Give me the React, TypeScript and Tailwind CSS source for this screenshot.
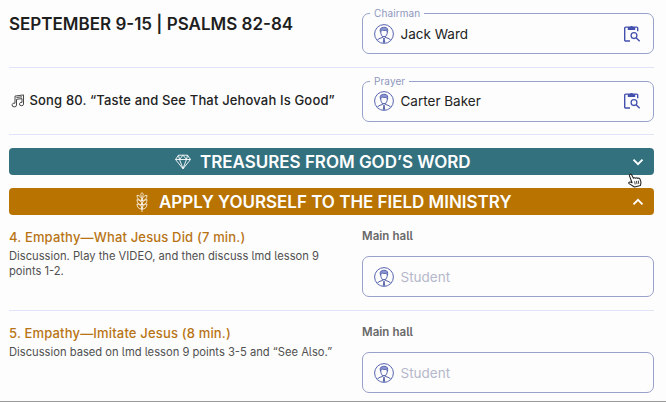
import type { ReactNode } from "react";

function Avatar() {
  return (
    <svg width="20" height="20" viewBox="0 0 20 20" fill="none" stroke="#5864ae" strokeWidth="1" className="shrink-0">
      <circle cx="10" cy="10" r="9.4" />
      <path d="M6.700 7c0 3.800 1.100 5.700 3.300 5.700s3.400-2.200 3.400-5.700" />
      <path d="M6.500 8.200c-.8-2.500-.2-4.200 1.400-4.400 1.600-1 5-.6 5.600 1.200.4 1.200.1 2.200-.1 3.200-.3-1-.5-1.600-.9-2-1.800.5-3.600.2-4.600-.2-.8.3-1.200 1-1.400 2.200z" fill="#8f9ad3" />
      <path d="M8.400 12.200v1.200l-3.900 1.500-1 1.400M11.600 12.200v1.200l3.900 1.500 1 1.400M8.400 13.400l1.600 1.300 1.600-1.300" />
      <path d="M9.300 14.800h1.400l.5 4h-2.400z" fill="#5864ae" stroke="none" />
    </svg>
  );
}

function ClipboardSearch() {
  return (
    <svg width="18" height="18" viewBox="0 0 18 18" fill="none" stroke="#4450ad" strokeWidth="1.400">
      <path d="M7 16H2.700a1 1 0 0 1-1-1V3.100a1 1 0 0 1 1-1h11a1 1 0 0 1 1 1v3.200" />
      <path d="M4.800 2h2.200a1.600 1.600 0 0 1 3 0h2.200v3H4.800z" fill="#4450ad" stroke="none" />
      <circle cx="11" cy="10.600" r="2.900" strokeWidth="1.300" />
      <path d="m13.100 12.700 3.600 3.600" strokeWidth="1.400" />
    </svg>
  );
}

function Notes() {
  return (
    <svg width="14" height="14" viewBox="0 0 14 14" fill="none" stroke="#333" strokeWidth="0.9" strokeLinejoin="round" className="shrink-0">
      <path d="M4 9.200V2.100L12.500.900v9.200a2 1.700 0 1 1-1.500-1.700V4.600L5.500 5.300v5.700a2.200 1.900 0 1 1-1.500-1.800" />
      <path d="M5.500 3.500 11 2.800" />
    </svg>
  );
}

function Diamond() {
  return (
    <svg width="16" height="16" viewBox="0 0 16 16" fill="none" stroke="#fff" strokeWidth="0.9" strokeLinejoin="round">
      <path d="M3.500 1.200h9l3 4.300L8 14.800.500 5.500zM.500 5.500h15M4.500 5.500 8 14.600l3.500-9.100M3.500 1.200l1 4.300L8 1.200l3.500 4.300 1-4.300" />
    </svg>
  );
}

function Wheat() {
  return (
    <svg width="12" height="20" viewBox="0 0 12 20" fill="none" stroke="#fff" strokeWidth="0.8">
      <path d="M6 5v15M6 4.800C4.300 3.300 4.500 2 6 .600c1.500 1.400 1.700 2.700 0 4.200z" />
      {[0, 4.3, 8.600].map((y) => (
        <g key={y} transform={`translate(0 ${y})`}>
          <path d="M6 8.600C2.800 8.300 1 6.700 1 3.300 4 3.600 5.600 5.100 6 8.600zM6 8.600c3.200-.3 5-1.900 5-5.300-3 .3-4.600 1.800-5 5.300z" />
        </g>
      ))}
    </svg>
  );
}

function Chevron({ up = false }: { up?: boolean }) {
  return (
    <svg width="12" height="8" viewBox="0 0 12 8" fill="none" stroke="#fff" strokeWidth="1.900" className={up ? "rotate-180" : ""}>
      <path d="m1.500 1.700 4.500 4.500 4.500-4.500" />
    </svg>
  );
}

function Hand() {
  return (
    <svg width="15" height="15" viewBox="0 0 14 14" fill="#fff" stroke="#222" strokeWidth="1" strokeLinejoin="round">
      <path d="M1.600 1.500c.7-.8 1.500-.4 1.900.3l1.600 3.100c.7-.7 1.600-.5 2 0 .700-.6 1.500-.4 2 .100.900-.5 1.900-.1 2.100.7l.8 2.600c.3 1.300-.3 2.300-.4 3.300l-5.400 1.500C4.800 12.200 3 11.300 1 9.900c-.7-.8.100-1.700 1.100-1.400l1.700.6L1.400 2.700c-.1-.5-.1-.9.200-1.200z" />
      <path d="M6.200 7.700l.5 3M7.900 7.400l.5 3M9.600 7.100l.4 3" strokeWidth="0.800" />
    </svg>
  );
}

function Field({ label, value }: { label?: string; value?: string }) {
  return (
    <div className="relative flex h-[41px] w-[292px] items-center rounded-[7px] border border-[#98a1ca] pr-[12px] pl-[11px]">
      {label && (
        <span className="absolute -top-[8px] left-[7px] bg-[#fdfdfd] px-[4px] text-[10px] leading-[14px] tracking-[0.100px] text-[#8e97be]">
          {label}
        </span>
      )}
      <Avatar />
      <span className={`ml-[6.500px] flex-1 text-[13.5px] leading-5 ${value ? "text-[#222]" : "text-[#b5b8ca]"}`}>
        {value ?? "Student"}
      </span>
      {value && <ClipboardSearch />}
    </div>
  );
}

function Bar({ icon, title, open = false, className }: { icon: ReactNode; title: string; open?: boolean; className: string }) {
  return (
    <div className={`flex h-[27px] items-center rounded-[4px] pr-[10.500px] text-white ${className}`}>
      {icon}
      <h2 className="flex-1 text-[17px] leading-6 font-semibold tracking-[-0.02px] whitespace-nowrap">{title}</h2>
      <Chevron up={open} />
    </div>
  );
}

function Part({ title, children }: { title: string; children: ReactNode }) {
  return (
    <div className="flex h-[95px] pt-[13px]">
      <div className="w-[353px]">
        <h3 className="text-[13px] leading-[18px] font-medium tracking-[0.17px] text-[#b87414]">{title}</h3>
        <p className="mt-[3px] text-[11.2px] leading-[15px] text-[#505050]">{children}</p>
      </div>
      <div>
        <p className="mb-[11px] text-[11.5px] leading-[17px] font-semibold tracking-[0.05px] text-[#686868]">Main hall</p>
        <Field />
      </div>
    </div>
  );
}

export default function App() {
  return (
    <main className="relative h-[402px] w-[666px] overflow-hidden border-b border-[#999] bg-[#fdfdfd] pr-[12px] pl-[9px] font-['Inter',sans-serif] [font-feature-settings:'cv05']">
      <header className="flex h-[68px] border-b border-[#e1e3fa] pt-[13px]">
        <h1 className="w-[353px] text-[17px] leading-[22px] font-semibold whitespace-nowrap text-[#1e1e1e]">SEPTEMBER 9-15 | PSALMS 82-84</h1>
        <Field label="Chairman" value="Jack Ward" />
      </header>
      <section className="flex h-[67px] items-center border-b border-[#e1e3fa]">
        <div className="flex w-[353px] items-center gap-[5px] pl-[1.500px] text-[13px] font-medium tracking-[0.160px] whitespace-nowrap text-[#222]">
          <Notes />
          <span>Song 80. “Taste and See That Jehovah Is Good”</span>
        </div>
        <Field label="Prayer" value="Carter Baker" />
      </section>
      <Bar className="mt-[13px] gap-[9px] bg-[#34717f] pl-[166px]" icon={<Diamond />} title="TREASURES FROM GOD’S WORD" />
      <Bar className="mt-[13px] gap-[11px] bg-[#b97300] pl-[127px]" icon={<Wheat />} title="APPLY YOURSELF TO THE FIELD MINISTRY" open />
      <div className="border-b border-[#dfe4f8]">
        <Part title="4. Empathy—What Jesus Did (7 min.)">
          Discussion. Play the VIDEO, and then discuss lmd lesson 9<br />points 1-2.
        </Part>
      </div>
      <Part title="5. Empathy—Imitate Jesus (8 min.)">Discussion based on lmd lesson 9 points 3-5 and “See Also.”</Part>
      <div className="absolute top-[173px] left-[628px]"><Hand /></div>
    </main>
  );
}
